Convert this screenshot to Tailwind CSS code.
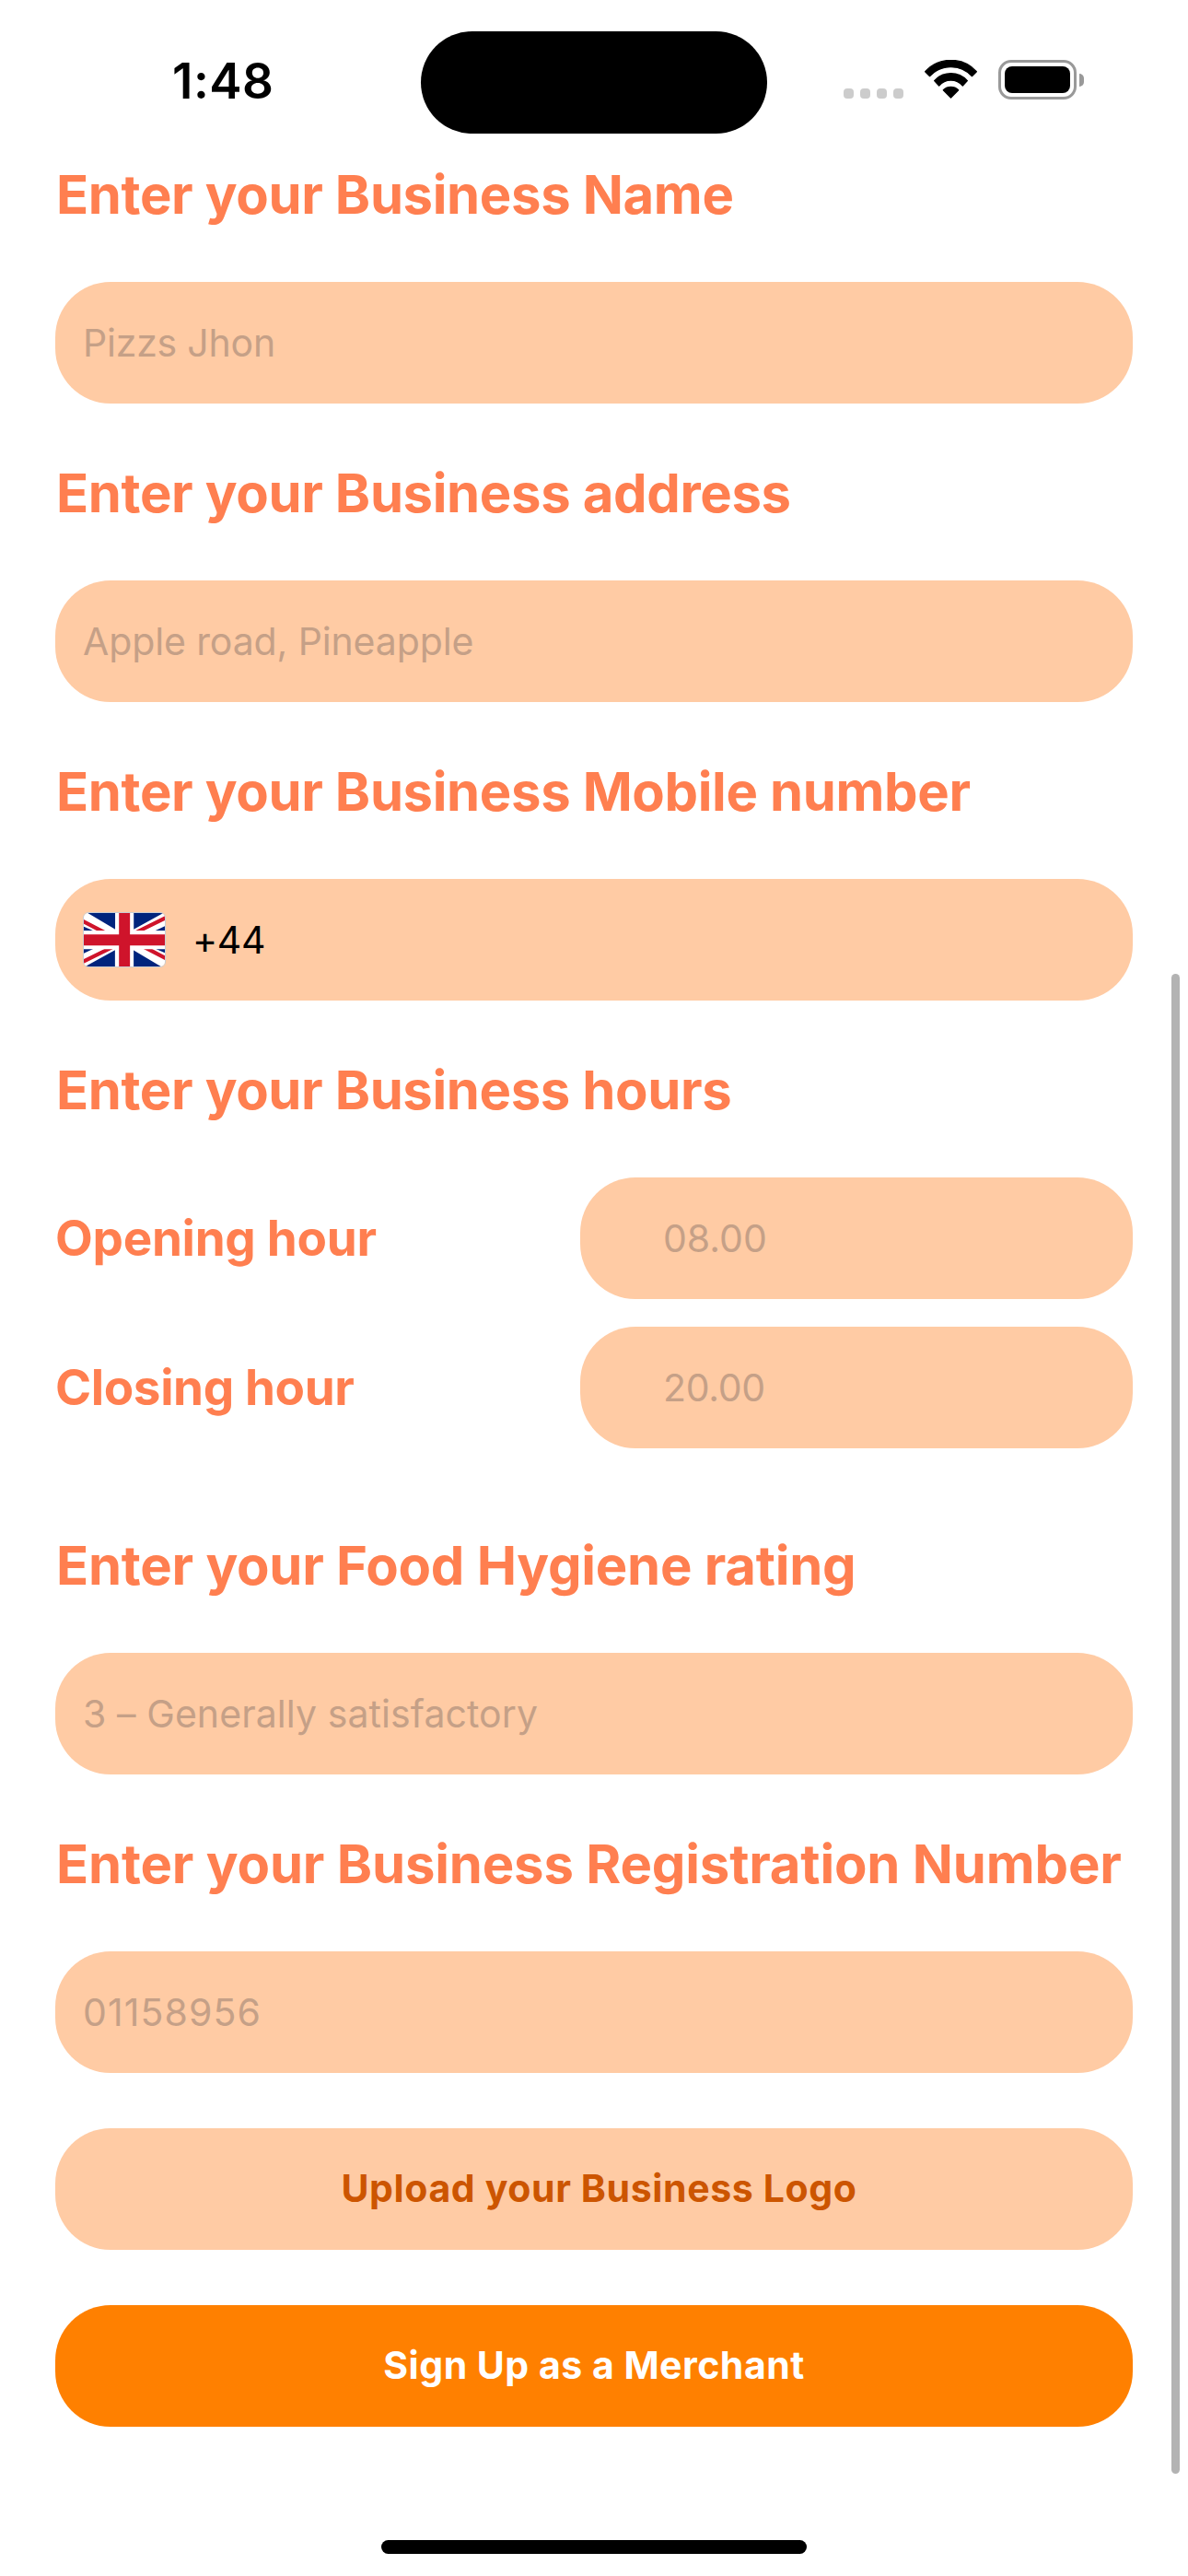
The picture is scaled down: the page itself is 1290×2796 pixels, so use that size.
<!DOCTYPE html>
<html lang="en">
<head>
<meta charset="utf-8">
<meta name="viewport" content="width=device-width">
<title>Merchant sign up</title>
<script src="https://cdn.jsdelivr.net/npm/@tailwindcss/browser@4"></script>
</head>
<body class="bg-white">
<div class="relative flex h-[2796px] w-[1290px] flex-col overflow-hidden bg-white font-['Inter',sans-serif]">

  <!-- Status bar -->
  <header class="flex h-[175px] shrink-0 items-center pt-0.5">
    <div class="w-[457px] pl-[187px] text-[53px] leading-none font-semibold tracking-[0.5px] text-black">1:48</div>
    <div class="mt-px h-[111px] w-[376px] rounded-full bg-black"></div>
    <div class="-mt-1 flex h-[43px] items-center pl-[83px]">
      <div class="flex gap-[7px] self-end pb-px">
        <span class="size-[11px] rounded-[4px] bg-[#cccccc]"></span>
        <span class="size-[11px] rounded-[4px] bg-[#cccccc]"></span>
        <span class="size-[11px] rounded-[4px] bg-[#cccccc]"></span>
        <span class="size-[11px] rounded-[4px] bg-[#cccccc]"></span>
      </div>
      <svg class="ml-[23px] h-[42px] w-[57px] self-start" viewBox="0 0 171 126" fill="#000" stroke="#000" stroke-width="4" stroke-linejoin="round">
        <path d="M2 38A113 113 0 0 1 169 38L154 53A93 93 0 0 0 17 53Z"/>
        <path d="M32 68A72 72 0 0 1 139 68L124 84A50 50 0 0 0 47 84Z"/>
        <path d="M61 98A36 36 0 0 1 110 98L85.500 123Z"/>
      </svg>
      <div class="ml-[23px] flex h-[43px] w-[85px] rounded-[14px] border-3 border-[#999999] p-1">
        <div class="flex-1 rounded-[8px] bg-black"></div>
      </div>
      <div class="ml-[3px] h-[14px] w-[5px] rounded-r-full bg-[#999999]"></div>
    </div>
  </header>

  <main class="flex flex-col px-[60px] text-[41px]">
    <h2 class="pl-px text-[58px] leading-[72px] font-bold tracking-[-0.36px] text-[#ff7f50]">Enter your Business Name</h2>
    <div class="mt-[59px] flex h-[132px] items-center rounded-[60px] bg-[#ffcba4] px-[30px] pt-0.5 tracking-[-0.2px] text-[#c5a087]">Pizzs Jhon</div>

    <h2 class="mt-[61px] pl-px text-[58px] leading-[72px] font-bold tracking-[-0.36px] text-[#ff7f50]">Enter your Business address</h2>
    <div class="mt-[59px] flex h-[132px] items-center rounded-[60px] bg-[#ffcba4] px-[30px] pt-0.5 tracking-[-0.12px] text-[#c5a087]">Apple road, Pineapple</div>

    <h2 class="mt-[61px] pl-px text-[58px] leading-[72px] font-bold tracking-[-0.36px] text-[#ff7f50]">Enter your Business Mobile number</h2>
    <div class="mt-[59px] flex h-[132px] items-center rounded-[60px] bg-[#ffcba4] px-[30px] text-black">
      <div class="h-[60px] w-[90px] overflow-hidden rounded-[6px] border border-[#c9cdd2]">
        <svg class="block h-[58px] w-[88px]" viewBox="0 0 265 174" preserveAspectRatio="none">
          <path fill="#fff" d="M0 0H265V174H0Z"/>
          <path fill="#00247d" d="M13 0H103V53ZM0 44L31 58H0ZM163 0H260L163 53ZM233 58L265 43V58ZM252 174H162V121ZM265 130L234 116H265ZM102 174H5L102 121ZM32 116L0 131V116Z"/>
          <path fill="#cf142b" d="M0 21V35L43 58H71ZM168 58H196L265 24V10ZM265 153V139L222 116H194ZM97 116H69L0 150V164Z"/>
          <path fill="#fff" d="M103 0H163V174H103ZM0 58H265V118H0Z"/>
          <path fill="#cf142b" d="M115 0H151V174H115ZM0 70H265V106H0Z"/>
        </svg>
      </div>
      <span class="ml-[29px] pt-0.5 tracking-[-0.3px] [font-feature-settings:'calt'_0]">+44</span>
    </div>

    <h2 class="mt-[61px] pl-px text-[58px] leading-[72px] font-bold tracking-[-0.38px] text-[#ff7f50]">Enter your Business hours</h2>
    <div class="mt-[59px] flex items-center justify-between">
      <h3 class="text-[53px] leading-none font-bold tracking-[-0.3px] text-[#ff7f50]">Opening hour</h3>
      <div class="flex h-[132px] w-[600px] items-center rounded-[60px] bg-[#ffcba4] pt-0.5 pl-[90px] text-[#c5a087]">08.00</div>
    </div>
    <div class="mt-[30px] flex items-center justify-between">
      <h3 class="text-[53px] leading-none font-bold tracking-[-0.4px] text-[#ff7f50]">Closing hour</h3>
      <div class="flex h-[132px] w-[600px] items-center rounded-[60px] bg-[#ffcba4] pt-0.5 pl-[90px] tracking-[-0.3px] text-[#c5a087]">20.00</div>
    </div>

    <h2 class="mt-[91px] pl-px text-[58px] leading-[72px] font-bold tracking-[-0.25px] text-[#ff7f50]">Enter your Food Hygiene rating</h2>
    <div class="mt-[59px] flex h-[132px] items-center rounded-[60px] bg-[#ffcba4] px-[30px] pt-0.5 tracking-[0.08px] text-[#c5a087]">3 – Generally satisfactory</div>

    <h2 class="mt-[61px] pl-px text-[58px] leading-[72px] font-bold tracking-[-0.18px] whitespace-nowrap text-[#ff7f50]">Enter your Business Registration Number</h2>
    <div class="mt-[59px] flex h-[132px] items-center rounded-[60px] bg-[#ffcba4] px-[30px] pt-0.5 tracking-[1.1px] text-[#c5a087]">01158956</div>

    <button class="mt-[60px] h-[132px] rounded-[60px] bg-[#ffcba4] pl-[11px] font-bold tracking-[0.62px] text-[#cc5500]">Upload your Business Logo</button>
    <button class="mt-[60px] h-[132px] rounded-[60px] bg-[#ff8000] font-bold tracking-[0.5px] text-white">Sign Up as a Merchant</button>
  </main>

  <!-- Home indicator -->
  <div class="mt-auto mb-[24px] h-[15px] w-[462px] self-center rounded-full bg-black"></div>

  <!-- Scroll indicator, over the content -->
  <div class="absolute top-[1057px] right-[9px] h-[1628px] w-[9px] rounded-full bg-[#b3b3b3]"></div>
</div>
</body>
</html>
